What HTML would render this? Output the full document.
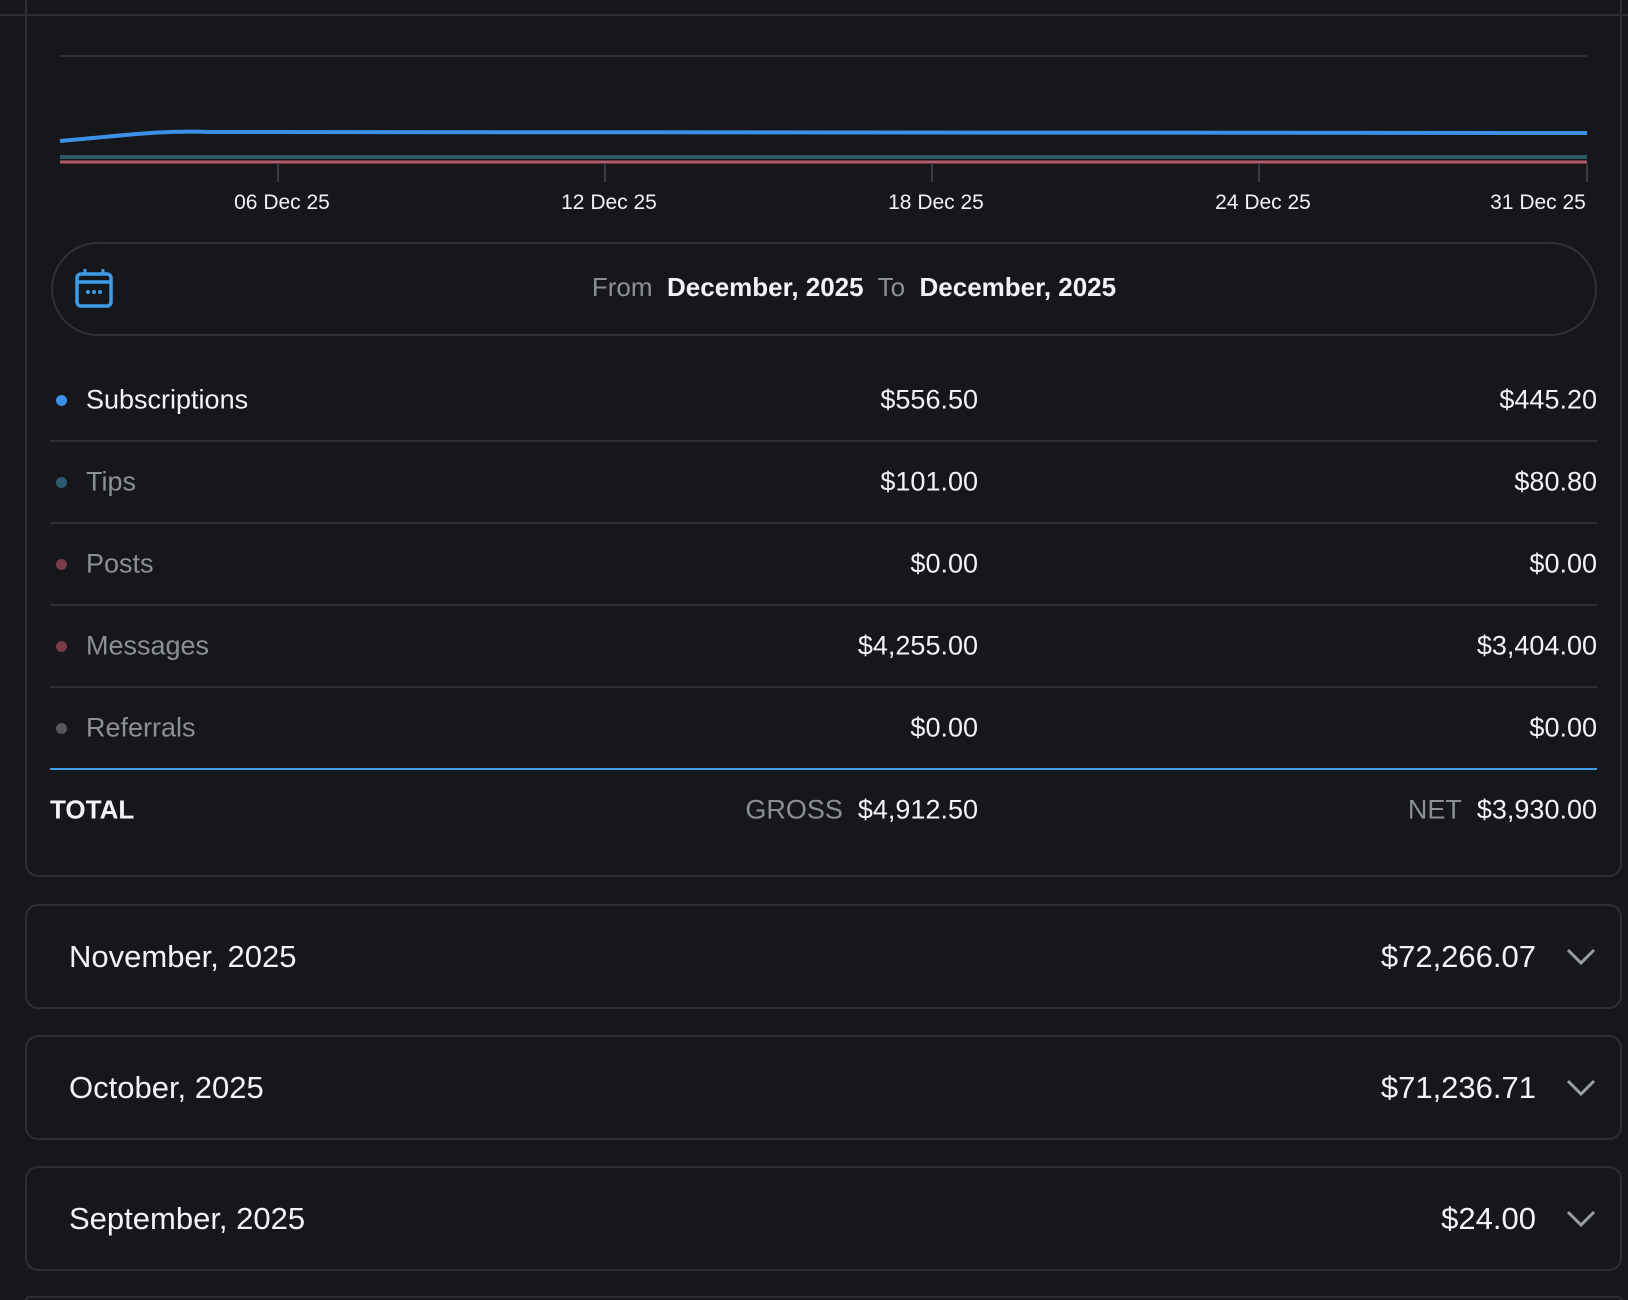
<!DOCTYPE html>
<html style="width:1628px;height:1300px;overflow:hidden"><head><meta charset="utf-8"><style>
*{margin:0;padding:0;box-sizing:border-box}
body{width:1628px;height:1300px;background:#16171a;font-family:"Liberation Sans",Roboto,sans-serif;color:#f2f3f5;position:relative;overflow:hidden}
.a{position:absolute}
.card{position:absolute;left:25px;width:1597px;border:2px solid #2c2e33;border-radius:13px}
.row{position:absolute;left:50px;width:1547px;height:82px;font-size:27px}
.row .l{position:absolute;left:36px;top:50%;transform:translateY(-50%);color:#8c8f94}
.row .d{position:absolute;left:6px;top:50%;width:11px;height:11px;margin-top:-5px;border-radius:50%}
.row .g{position:absolute;right:619px;top:50%;transform:translateY(-50%);white-space:nowrap}
.row .n{position:absolute;right:0;top:50%;transform:translateY(-50%);white-space:nowrap}
.sep{position:absolute;left:50px;width:1547px;height:2px;background:#2c2e33}
.tick{position:absolute;top:163px;width:2px;height:19px;background:#3a3c41}
.lbl{position:absolute;top:191px;font-size:21px;transform:translateX(-50%);white-space:nowrap}
.m{position:absolute;left:25px;width:1597px;height:105px;border:2px solid #2c2e33;border-radius:13px}
.m .t{position:absolute;left:42px;top:50%;transform:translateY(-50%);font-size:31px}
.m .v{position:absolute;right:84px;top:50%;transform:translateY(-50%);font-size:31px}
.m svg{position:absolute;right:24px;top:50%;margin-top:-9px}
</style></head><body>
<div class="a" style="left:0;top:14px;width:1628px;height:2px;background:#2c2e33"></div>
<div class="card" style="top:-20px;height:897px"></div>
<div class="a" style="left:60px;top:55px;width:1527px;height:2px;background:#2f3136"></div>
<svg class="a" style="left:0;top:0" width="1628" height="200">
<path d="M60 141 C120 136 160 130 210 132 L1587 133" stroke="#3d8fe8" stroke-width="4" fill="none"/>
<line x1="60" y1="157" x2="1587" y2="157" stroke="#2e5a66" stroke-width="4"/>
<line x1="60" y1="162" x2="1587" y2="162" stroke="#b5586a" stroke-width="3"/>
</svg>
<div class="tick" style="left:277px"></div><div class="tick" style="left:604px"></div><div class="tick" style="left:931px"></div><div class="tick" style="left:1258px"></div><div class="tick" style="left:1586px"></div>
<div class="lbl" style="left:282px">06 Dec 25</div><div class="lbl" style="left:609px">12 Dec 25</div><div class="lbl" style="left:936px">18 Dec 25</div><div class="lbl" style="left:1263px">24 Dec 25</div><div class="lbl" style="left:1538px">31 Dec 25</div>
<div class="a" style="left:51px;top:242px;width:1546px;height:94px;border:2px solid #2f3136;border-radius:47px"></div>
<svg class="a" style="left:75px;top:268px" width="38" height="40" viewBox="0 0 38 40"><rect x="2" y="6" width="34" height="32" rx="4" fill="none" stroke="#3d9be9" stroke-width="3.5"/><line x1="2" y1="14" x2="36" y2="14" stroke="#3d9be9" stroke-width="3.5"/><line x1="10" y1="1" x2="10" y2="7" stroke="#3d9be9" stroke-width="3"/><line x1="28" y1="1" x2="28" y2="7" stroke="#3d9be9" stroke-width="3"/><circle cx="13" cy="24" r="2" fill="#3d9be9"/><circle cx="19" cy="24" r="2" fill="#3d9be9"/><circle cx="25" cy="24" r="2" fill="#3d9be9"/></svg>
<div class="a" style="left:0;width:1628px;top:272px;text-align:center;font-size:26px;padding-left:80px"><span style="color:#8c8f94">From</span>&nbsp; <b>December, 2025</b>&nbsp; <span style="color:#8c8f94">To</span>&nbsp; <b>December, 2025</b></div>
<div class="row" style="top:359px"><span class="d" style="background:#3d8fe8"></span><span class="l" style="color:#f2f3f5">Subscriptions</span><span class="g">$556.50</span><span class="n">$445.20</span></div>
<div class="sep" style="top:440px"></div>
<div class="row" style="top:441px"><span class="d" style="background:#2e5a70"></span><span class="l">Tips</span><span class="g">$101.00</span><span class="n">$80.80</span></div>
<div class="sep" style="top:522px"></div>
<div class="row" style="top:523px"><span class="d" style="background:#7a3a48"></span><span class="l">Posts</span><span class="g">$0.00</span><span class="n">$0.00</span></div>
<div class="sep" style="top:604px"></div>
<div class="row" style="top:605px"><span class="d" style="background:#7a3a48"></span><span class="l">Messages</span><span class="g">$4,255.00</span><span class="n">$3,404.00</span></div>
<div class="sep" style="top:686px"></div>
<div class="row" style="top:687px"><span class="d" style="background:#55575c"></span><span class="l">Referrals</span><span class="g">$0.00</span><span class="n">$0.00</span></div>
<div class="sep" style="top:768px;background:#3d9be9"></div>
<div class="row" style="top:769px"><span class="l" style="left:0;color:#f2f3f5;font-weight:bold;font-size:26px">TOTAL</span><span class="g"><span style="color:#8c8f94">GROSS</span>&nbsp; $4,912.50</span><span class="n"><span style="color:#8c8f94">NET</span>&nbsp; $3,930.00</span></div>
<div class="m" style="top:904px"><span class="t">November, 2025</span><span class="v">$72,266.07</span><svg width="30" height="18" viewBox="0 0 30 18"><path d="M2 2 L15 15 L28 2" stroke="#9a9da2" stroke-width="3" fill="none"/></svg></div>
<div class="m" style="top:1035px"><span class="t">October, 2025</span><span class="v">$71,236.71</span><svg width="30" height="18" viewBox="0 0 30 18"><path d="M2 2 L15 15 L28 2" stroke="#9a9da2" stroke-width="3" fill="none"/></svg></div>
<div class="m" style="top:1166px"><span class="t">September, 2025</span><span class="v">$24.00</span><svg width="30" height="18" viewBox="0 0 30 18"><path d="M2 2 L15 15 L28 2" stroke="#9a9da2" stroke-width="3" fill="none"/></svg></div>
<div class="m" style="top:1296px;height:4px;border-bottom:none;border-radius:13px 13px 0 0"></div>
</body></html>
